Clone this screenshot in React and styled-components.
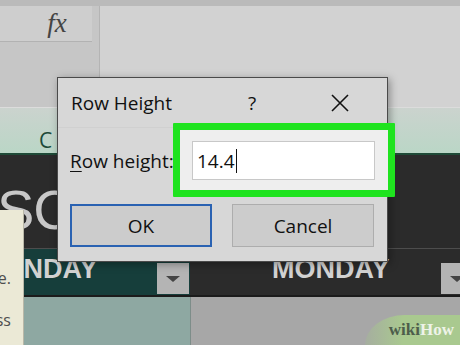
import React from 'react';
import styled, { createGlobalStyle } from 'styled-components';

const GlobalStyle = createGlobalStyle`
  html, body {
    margin: 0;
    padding: 0;
    background: #2b2b2b;
  }
`;

const Page = styled.div`
  position: relative;
  width: 460px;
  height: 345px;
  overflow: hidden;
  display: flex;
  flex-direction: column;
  font-family: "Open Sans", "Noto Sans", sans-serif;
`;

const TopStrip = styled.div`
  height: 6px;
  background: #bababa;
`;

const Toolbar = styled.div`
  display: flex;
  height: 101px;
`;

const NameColumn = styled.div`
  width: 99px;
  background: #c6c6c6;
  border-right: 1px solid #b4b4b4;
`;

const NameBox = styled.div`
  width: 92px;
  height: 36px;
  background: #cecece;
  border-bottom: 1px solid #b2b2b2;
  box-sizing: border-box;
  display: flex;
  align-items: center;
  justify-content: center;
  padding-left: 22px;
  font-family: "Liberation Serif", serif;
  font-style: italic;
  font-size: 27px;
  color: #444;
`;

const FormulaArea = styled.div`
  flex: 1;
  background: #d2d2d2;
`;

const HeaderRow = styled.div`
  height: 48px;
  border-top: 1px solid #dcdcdc;
  border-bottom: 2px solid #1e4a37;
  background: linear-gradient(to bottom, #cbd3ce 0%, #bad6c6 100%);
  display: flex;
  align-items: flex-end;
  padding-left: 39px;
  padding-bottom: 2px;
  box-sizing: border-box;
`;

const ColumnLetter = styled.span`
  font-size: 21px;
  color: #1d4a38;
  line-height: 1;
`;

const TitleBlock = styled.div`
  height: 93px;
  background: #2b2b2b;
  border-bottom: 1px solid #4d4d4d;
  display: flex;
  align-items: center;
  overflow: hidden;
`;

const BigTitle = styled.span`
  font-family: "Liberation Sans", sans-serif;
  font-size: 56px;
  color: #c8c8c8;
  letter-spacing: -1px;
  margin-left: -3px;
  margin-top: 16px;
  white-space: nowrap;
`;

const DayRow = styled.div`
  display: flex;
  height: 46px;
  border-bottom: 2px solid #1b1b1b;
`;

const DayCell = styled.div`
  position: relative;
  width: ${(props) => props.width}px;
  flex: ${(props) => (props.grow ? 1 : 'none')};
  background: ${(props) => props.bg};
  display: flex;
  align-items: center;
  padding-left: ${(props) => props.indent}px;
  box-sizing: border-box;
  overflow: hidden;
`;

const DayName = styled.span`
  font-family: "Liberation Sans", sans-serif;
  font-weight: bold;
  font-size: 27px;
  color: #d2d2d2;
  white-space: nowrap;
  margin-top: -6px;
`;

const Dropdown = styled.div`
  position: absolute;
  top: 14px;
  left: ${(props) => props.left}px;
  width: 32px;
  height: 31px;
  background: #b4b4b4;
  display: flex;
  align-items: center;
  justify-content: center;
  &::after {
    content: '';
    border-left: 7px solid transparent;
    border-right: 7px solid transparent;
    border-top: 6px solid #444;
  }
`;

const BottomRow = styled.div`
  display: flex;
  flex: 1;
`;

const BottomCell = styled.div`
  width: ${(props) => props.width}px;
  flex: ${(props) => (props.grow ? 1 : 'none')};
  background: ${(props) => props.bg};
  border-right: ${(props) => (props.grow ? 'none' : '1px solid #7d8d89')};
`;

const Note = styled.div`
  position: absolute;
  left: 0;
  top: 210px;
  width: 24px;
  height: 135px;
  background: #ebe9d6;
  border-right: 1px solid #b9b8a8;
  overflow: hidden;
  display: flex;
  flex-direction: column;
  align-items: flex-end;
  padding-top: 58px;
  padding-right: 12px;
  box-sizing: border-box;
`;

const NoteLine = styled.span`
  font-size: 16px;
  color: #4e4e4e;
  line-height: 20px;
  white-space: nowrap;
  margin-bottom: ${(props) => props.gap || 0}px;
`;

const Watermark = styled.div`
  position: absolute;
  right: 0;
  bottom: 0;
  width: 95px;
  height: 30px;
  border-top-left-radius: 40px 30px;
  background: linear-gradient(to right, rgba(160, 200, 130, 0.2), #a9c98f 40%);
  display: flex;
  align-items: center;
  justify-content: flex-end;
  padding-right: 6px;
  box-sizing: border-box;
  font-family: "Liberation Serif", serif;
  font-weight: bold;
  font-size: 17px;
`;

const Wiki = styled.span`
  color: #4d5d4b;
`;

const How = styled.span`
  color: #eef3e8;
`;

/* dialog */

const Dialog = styled.div`
  position: absolute;
  left: 57px;
  top: 77px;
  width: 331px;
  height: 185px;
  box-sizing: border-box;
  background: #d7d7d7;
  border: 1px solid #4a4a4a;
  box-shadow: 2px 2px 8px rgba(0, 0, 0, 0.35);
  display: flex;
  flex-direction: column;
`;

const TitleBar = styled.div`
  height: 49px;
  display: flex;
  align-items: center;
  padding-left: 13px;
  padding-right: 24px;
  border-bottom: 1px solid #d0d0d0;
`;

const Title = styled.span`
  flex: 1;
  font-size: 19px;
  color: #111;
`;

const TitleButton = styled.span`
  width: 46px;
  display: flex;
  justify-content: center;
  align-items: center;
  font-size: 19px;
  color: #111;
  margin-left: ${(props) => props.gap || 0}px;
`;

const Body = styled.div`
  display: flex;
  flex-direction: column;
  padding: 13px 12px 0 12px;
`;

const FieldRow = styled.div`
  display: flex;
  align-items: center;
  height: 39px;
`;

const Label = styled.label`
  width: 122px;
  font-size: 19px;
  color: #111;
  u {
    text-decoration-thickness: 1px;
    text-underline-offset: 3px;
  }
`;

const InputWrap = styled.div`
  position: relative;
  width: 183px;
  height: 39px;
`;

const Highlight = styled.div`
  position: absolute;
  left: -19px;
  top: -18px;
  right: -20px;
  bottom: -17px;
  border: 7px solid #1fe31f;
  background: #eeeeee;
  border-radius: 1px;
`;

const Input = styled.div`
  position: relative;
  height: 100%;
  box-sizing: border-box;
  background: #fff;
  border: 1px solid #c8c8c8;
  display: flex;
  align-items: center;
  padding-left: 4px;
  font-size: 19px;
  color: #111;
`;

const Caret = styled.span`
  display: inline-block;
  width: 1px;
  height: 24px;
  background: #111;
  margin-left: 1px;
`;

const ButtonRow = styled.div`
  display: flex;
  gap: 20px;
  margin-top: 24px;
`;

const Button = styled.div`
  width: 142px;
  height: 43px;
  box-sizing: border-box;
  display: flex;
  align-items: center;
  justify-content: center;
  font-size: 19px;
  color: #111;
  background: #cccccc;
  border: ${(props) => (props.primary ? '2px solid #2a62b2' : '1px solid #adadad')};
`;

const CloseIcon = () => (
  <svg width="20" height="20" viewBox="0 0 20 20">
    <path d="M2 2 L18 18 M18 2 L2 18" stroke="#111" strokeWidth="1.6" fill="none" />
  </svg>
);

const App = () => (
  <>
    <GlobalStyle />
    <Page>
      <TopStrip />
      <Toolbar>
        <NameColumn>
          <NameBox>fx</NameBox>
        </NameColumn>
        <FormulaArea />
      </Toolbar>
      <HeaderRow>
        <ColumnLetter>C</ColumnLetter>
      </HeaderRow>
      <TitleBlock>
        <BigTitle>SCHEDULE</BigTitle>
      </TitleBlock>
      <DayRow>
        <DayCell width={190} bg="#163e3b" indent={0}>
          <DayName style={{ marginLeft: -14 }}>SUNDAY</DayName>
          <Dropdown left={157} />
        </DayCell>
        <DayCell grow bg="#2b2b2b" indent={82}>
          <DayName>MONDAY</DayName>
          <Dropdown left={251} />
        </DayCell>
      </DayRow>
      <BottomRow>
        <BottomCell width={190} bg="#8ea8a2" />
        <BottomCell grow bg="#a7a7a7" />
      </BottomRow>

      <Note>
        <NoteLine gap={22}>the date.</NoteLine>
        <NoteLine>in class</NoteLine>
      </Note>

      <Watermark>
        <Wiki>wiki</Wiki>
        <How>How</How>
      </Watermark>

      <Dialog>
        <TitleBar>
          <Title>Row Height</Title>
          <TitleButton>?</TitleButton>
          <TitleButton gap={42}><CloseIcon /></TitleButton>
        </TitleBar>
        <Body>
          <FieldRow>
            <Label><u>R</u>ow height:</Label>
            <InputWrap>
              <Highlight />
              <Input>14.4<Caret /></Input>
            </InputWrap>
          </FieldRow>
          <ButtonRow>
            <Button primary>OK</Button>
            <Button>Cancel</Button>
          </ButtonRow>
        </Body>
      </Dialog>
    </Page>
  </>
);

export default App;
